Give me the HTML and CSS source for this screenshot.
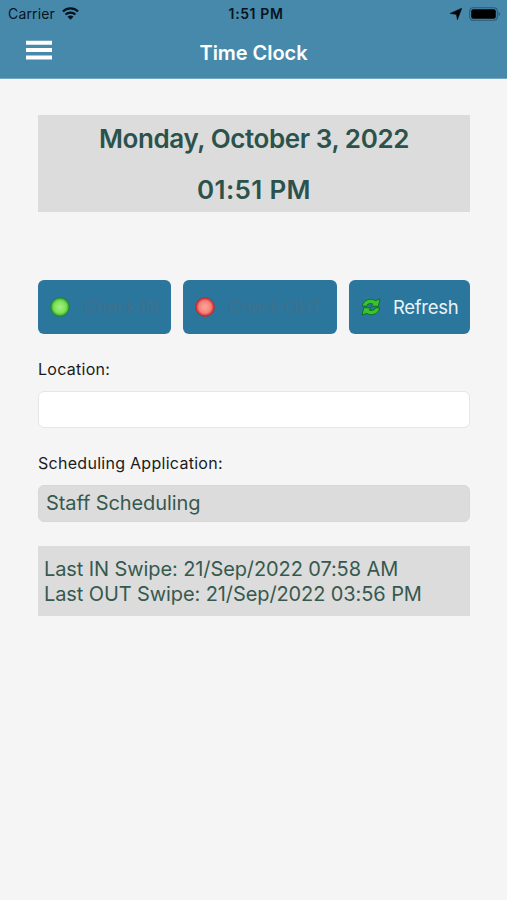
FILE: index.html
```html
<!DOCTYPE html>
<html lang="en">
<head>
<meta charset="utf-8">
<title>Time Clock</title>
<link rel="stylesheet" href="styles.css">
</head>
<body>
<header class="header">
  <div class="status">
    <div class="carrier"><span>Carrier</span>
      <svg width="17" height="13" viewBox="0 0 17 13"><g fill="none" stroke="#07131d" stroke-width="2.1"><path d="M.9 4.5C5.1.3 11.9.3 16.1 4.5"/><path d="M3.5 7.6c2.8-2.7 7.2-2.7 10 0"/></g><path d="M5.5 9.7c1.7-1.5 4.3-1.5 6 0l-3 3z" fill="#07131d"/></svg>
    </div>
    <span class="clock">1:51 PM</span>
    <div class="indicators">
      <svg width="12" height="12" viewBox="0 0 12 12"><path d="M11.8.2 7.4 11.8 6.4 6.4 0 5.4z" fill="#02070b" stroke="#02070b" stroke-width=".5"/></svg>
      <svg width="32" height="14" viewBox="0 0 32 14"><rect x=".7" y=".7" width="27.6" height="12.6" rx="3.5" fill="none" stroke="#2d5a73" stroke-width="1.1"/><rect x="2.2" y="2.2" width="24.6" height="9.6" rx="2" fill="#000"/><path d="M29.6 4.8c2 .8 2 3.6 0 4.4z" fill="#2d5a73"/></svg>
    </div>
  </div>
  <div class="navbar">
    <svg class="menu" width="26" height="20" viewBox="0 0 26 20"><path d="M0 .8h26v4H0zM0 8.1h26v4H0zM0 15.4h26v4H0z" fill="#fff"/></svg>
    <h1 class="title">Time Clock</h1>
  </div>
</header>
<main class="content">
  <section class="now"><div class="date">Monday, October 3, 2022</div><div class="time">01:51 PM</div></section>
  <div class="actions">
    <button class="action check-in" disabled>
      <svg width="22" height="22" viewBox="0 0 22 22"><defs><radialGradient id="green" cx=".5" cy=".5" r=".5"><stop offset="0" stop-color="#a5f07c"/><stop offset=".65" stop-color="#7fe05a"/><stop offset="1" stop-color="#2fa425"/></radialGradient></defs><circle cx="11" cy="11" r="9.3" fill="url(#green)" stroke="#1c8735" stroke-width="1"/></svg>
      <span>Check IN</span>
    </button>
    <button class="action check-out" disabled>
      <svg width="22" height="22" viewBox="0 0 22 22"><defs><radialGradient id="red" cx=".5" cy=".5" r=".5"><stop offset="0" stop-color="#ffa79b"/><stop offset=".65" stop-color="#f48178"/><stop offset="1" stop-color="#cf2828"/></radialGradient></defs><circle cx="11" cy="11" r="9.3" fill="url(#red)" stroke="#ad3039" stroke-width="1"/></svg>
      <span>Check OUT</span>
    </button>
    <button class="action refresh">
      <svg width="20" height="18" viewBox="0 0 20 18"><g fill="#38c52c" stroke="#12691f" stroke-width=".9" stroke-linejoin="round"><path d="M1.3 8C2.4 2.2 9.2-.6 14.6 2.7L19 .8l-1.7 7.6-7.3-.3 2-2C9.1 4.9 6.4 5.7 5.2 8.3z"/><path d="M18.7 10c-1.1 5.8-7.9 8.6-13.3 5.3L1 17.2l1.7-7.6 7.3.3-2 2c2.9 1.2 5.6.4 6.8-2.2z"/></g></svg>
      <span>Refresh</span>
    </button>
  </div>
  <label class="label" for="location"><span class="location-label">Location:</span></label>
  <input class="field" id="location" type="text">
  <div class="label label-app"><span>Scheduling Application:</span></div>
  <div class="field field-app"><span>Staff Scheduling</span></div>
  <section class="swipes"><div><span class="swipe-in">Last IN Swipe: 21/Sep/2022 07:58 AM</span></div><div><span class="swipe-out">Last OUT Swipe: 21/Sep/2022 03:56 PM</span></div></section>
</main>
</body>
</html>
```
FILE: styles.css
```css
* { box-sizing: border-box; }
body { margin: 0; min-height: 900px; background: #f5f5f5; color: #1b1b1b; font-family: Inter, "Liberation Sans", sans-serif; }
svg { display: block; flex: none; }
.header { height: 79px; background: #4789aa; border-bottom: 1px solid #75a8c0; }
.status { height: 27px; padding: 0 6px 0 8px; display: grid; grid-template-columns: 1fr auto 1fr; align-items: center; font-size: 14px; color: #07131d; }
.carrier, .indicators { display: flex; align-items: center; gap: 7px; }
.carrier { letter-spacing: .15px; }
.indicators { justify-content: flex-end; }
.clock { font-size: 14px; font-weight: 600; letter-spacing: .6px; margin-left: 3px; }
.navbar { height: 51px; display: grid; grid-template-columns: 1fr auto 1fr; align-items: center; }
.menu { margin: -5px 0 0 26px; }
.title { margin: 0; font-size: 20px; line-height: 24px; font-weight: 600; color: #fff; letter-spacing: -.05px; }
.content { padding: 36px 37px 0 38px; }
.now { height: 97px; background: #dcdcdc; color: #2b524b; font-size: 26px; font-weight: 600; text-align: center; white-space: nowrap; overflow: hidden; }
.date { height: 49px; line-height: 47px; letter-spacing: -.41px; }
.time { height: 48px; line-height: 51px; letter-spacing: .35px; }
.actions { display: grid; grid-template-columns: 133px 154px 121px; gap: 12px; margin-top: 68px; }
.action { height: 54px; border: 0; border-radius: 6px; padding: 0 0 0 11px; display: flex; align-items: center; gap: 12px; background: #2a769d; color: #e9f3fa; font: 400 18.5px Inter, sans-serif; white-space: nowrap; }
.check-in, .check-out { color: #3d718e; letter-spacing: -.65px; }
.check-out { letter-spacing: -.5px; font-size: 18px; }
.refresh { padding-left: 12px; letter-spacing: -.3px; }
.label { display: block; margin-top: 23px; height: 24px; line-height: 24px; font-size: 16px; letter-spacing: .28px; }
.field { display: block; width: 100%; height: 37px; margin-top: 10px; border: 1px solid #e6e6e6; border-radius: 6px; background: #fff; }
.field-app { background: #dcdcdc; color: #36594f; border-color: #d8d8d8; padding-left: 7px; font-size: 20px; line-height: 35px; letter-spacing: -.1px; }
.swipes { margin-top: 24px; height: 70px; padding: 11px 6px; background: #dcdcdc; color: #36594f; font-size: 20px; line-height: 25px; white-space: nowrap; letter-spacing: -.1px; }
```
